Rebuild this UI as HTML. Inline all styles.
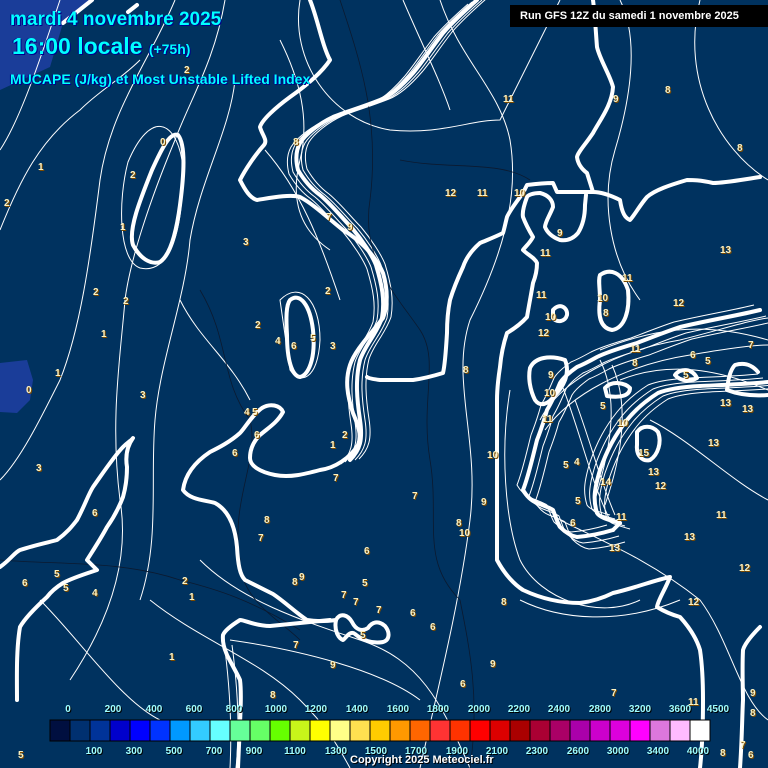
<!DOCTYPE html>
<html><head><meta charset="utf-8"><style>
html,body{margin:0;padding:0;background:#00315f;}
#w{position:relative;width:768px;height:768px;overflow:hidden;background:#00325f;font-family:"Liberation Sans",sans-serif;}
svg{position:absolute;left:0;top:0}
.t{position:absolute;color:#00ffff;font-weight:bold;text-shadow:1px 1px 0 #00008b,-1px 0 0 #00008b;white-space:nowrap}
.n{position:absolute;color:#fff3c0;font-size:10px;font-weight:bold;text-shadow:1px 1px 0 #7a4a00}
.lg{position:absolute;color:#a0ffff;font-size:10px;font-weight:bold;text-shadow:1px 1px 0 #000;transform:translateX(-50%)}
</style></head><body><div id="w">
<svg width="768" height="768" viewBox="0 0 768 768">
<defs>
<path id="pC" d="M477,0 C460,15 450,25 443,33 C430,50 420,65 413,73 C400,88 390,96 380,100 C360,108 345,112 333,117 C318,124 305,135 300,143 C295,152 296,162 298,170 C305,182 313,190 320,195 C332,205 342,218 352,228 C362,240 372,255 376,265 C382,285 385,300 382,318 C376,335 365,345 360,360 C355,380 357,400 360,420 C363,440 360,450 350,460"/>
<path id="pI" d="M768,382 C750,384 720,385 700,386 C680,387 668,389 658,393 C647,400 635,410 627,420 C615,435 607,450 600,470 C594,490 593,500 597,513 C600,518 610,520 620,523"/>
<path id="pI2" d="M760,310 C740,315 710,320 680,327 C665,332 650,338 637,343 C620,348 605,353 597,357 C588,362 582,365 577,367 C570,372 563,378 560,383 C555,395 550,405 547,410 C543,425 540,432 537,440 C532,460 528,478 523,490 C527,497 532,501 537,503 C545,506 550,508 553,510 C556,518 558,524 560,527 C566,533 571,536 577,537 C590,536 603,533 613,530"/>
</defs>
<path d="M0,0 L90,0 L63,23 L50,67 L0,90 Z" fill="#1a3d99"/>
<path d="M0,363 L27,360 L33,380 L30,400 L17,413 L0,412 Z" fill="#1a3d99"/>
<g fill="none" stroke="#fff" stroke-width="1">
<use href="#pC" transform="translate(-5,2)"/>
<use href="#pC" transform="translate(5,0)"/>
<use href="#pC" transform="translate(9,-1)"/>
<use href="#pC" transform="translate(-9,4)"/>
<use href="#pI" transform="translate(-5,-4)"/>
<use href="#pI" transform="translate(-10,-8)"/>
<use href="#pI" transform="translate(5,3)"/>
<use href="#pI" transform="translate(10,6)"/>
<use href="#pI2" transform="translate(6,6)"/>
<use href="#pI2" transform="translate(12,12)"/>
<use href="#pI2" transform="translate(-6,-5)"/>
<path d="M60,0 C40,60 20,120 0,150"/>
<path d="M0,230 C20,180 40,140 80,110 C100,90 120,80 140,60"/>
<path d="M175,0 C150,60 110,110 100,180 C90,260 80,330 60,380 C40,420 20,460 0,480"/>
<path d="M225,0 C215,60 190,100 175,140 C150,200 130,260 125,300 C120,360 110,420 120,500 C130,560 110,620 70,680"/>
<path d="M235,80 C230,130 200,180 190,240 C185,300 160,360 155,420 C150,480 160,540 140,600"/>
<path d="M300,0 C290,60 330,120 390,130 C440,135 470,120 500,120 C520,80 540,40 560,0"/>
<path d="M440,0 C460,60 500,90 510,140 C520,200 500,260 470,320 C450,380 480,440 470,520 C460,600 440,680 420,768"/>
<path d="M403,0 C420,40 440,80 450,110"/>
<path d="M620,0 C640,40 630,100 615,150 C600,200 610,260 640,300"/>
<path d="M700,0 C680,80 720,150 768,180"/>
<path d="M600,350 C650,330 700,320 768,340"/>
<path d="M620,380 C670,360 720,370 768,390"/>
<path d="M650,420 C690,440 730,480 768,500"/>
<path d="M560,520 C600,540 650,560 700,600 C730,640 740,700 768,720"/>
<path d="M200,560 C240,600 300,620 360,640 C420,660 440,700 470,768"/>
<path d="M150,600 C200,640 260,660 300,700 C330,730 340,750 350,768"/>
<path d="M230,640 C300,650 380,670 420,700"/>
<path d="M40,600 C80,640 120,700 160,720"/>
<path d="M280,300 C300,280 320,300 320,340 C318,380 300,385 290,370 Z"/>
<path d="M128,162 C150,110 175,120 182,160 C185,230 170,275 140,268 C118,260 118,200 128,162 Z"/>
<path d="M510,390 C500,450 505,520 520,560 C540,600 600,620 640,600"/>
<path d="M560,380 C580,430 590,480 610,520"/>
<path d="M575,400 C590,440 600,480 615,515"/>
<path d="M540,420 C560,380 620,350 680,340 C720,330 750,320 768,318"/>
<path d="M545,430 C570,395 625,365 690,355 C730,348 755,345 768,345"/>
<path d="M600,360 C620,400 610,450 595,500"/>
<path d="M612,365 C630,405 622,455 605,505"/>
<path d="M280,40 C300,80 310,120 300,160 C290,200 300,230 330,250"/>
<path d="M265,150 C300,190 320,240 340,300"/>
<path d="M180,300 C200,340 230,360 250,400"/>
<path d="M225,650 C230,690 232,730 230,768"/>
<path d="M232,645 C238,690 240,730 236,768"/>
<path d="M520,600 C560,620 620,625 680,600"/>
</g>
<g fill="none" stroke="#0b1a30" stroke-width="0.8">
<path d="M340,0 C360,60 380,120 370,200 C360,260 400,300 420,330 C440,360 420,400 430,460 C440,520 420,560 460,600 C470,650 480,700 470,768"/>
<path d="M200,290 C230,340 220,380 250,420 C260,460 230,500 240,560 C240,600 280,620 300,640"/>
<path d="M400,160 C450,170 500,160 530,180"/>
<path d="M0,560 C60,565 120,560 180,580 C220,590 250,600 300,630"/>
</g>
<g fill="none" stroke="#fff" stroke-width="4" stroke-linejoin="round" stroke-linecap="round">
<path d="M92,0 L63,23"/>
<path d="M137,5 L128,12"/>
<path d="M310,0 C318,20 322,45 330,60 C320,75 300,90 290,97 C275,108 262,120 260,127 C262,135 268,140 264,145 C255,155 245,170 240,180 C245,190 250,198 257,200 C270,198 290,194 300,197 C315,205 330,220 343,230 C360,240 375,255 383,273 C388,290 388,305 383,318 C370,335 355,350 350,365 C345,380 347,395 353,413 C358,425 362,435 358,445 C350,458 335,468 320,470 C305,474 290,478 275,475 C260,472 250,466 250,458 C250,448 255,440 260,435 C268,428 277,423 283,412 C280,405 270,403 262,408 C252,415 245,428 240,433 C230,442 218,448 210,452 C195,462 185,475 183,490 C190,500 205,500 215,503 C228,510 235,525 237,547 C238,565 240,575 245,580 C255,585 265,590 273,594 C285,602 295,612 307,620 C318,622 328,621 336,620"/>
<use href="#pC"/>
<path d="M290,300 C300,292 310,305 313,330 C316,360 308,375 300,377 C292,376 287,360 287,335 C286,318 286,305 290,300 Z"/>
<path d="M178,135 C186,145 184,175 180,205 C176,235 170,255 160,262 C150,265 140,258 133,245 C128,230 140,200 152,170 C162,148 170,132 178,135 Z"/>
<path d="M0,567 C10,560 15,552 20,550 C35,545 50,542 57,540 C68,532 73,525 77,520 C85,505 88,495 93,487 C105,470 115,455 123,447 C128,442 132,440 133,438 C128,445 125,455 127,467 C127,480 125,490 123,497 C118,510 112,520 107,527 C100,540 92,552 87,560 L97,570 C85,574 72,578 63,583 C55,588 50,593 47,597 C35,608 25,618 20,627 C16,650 17,680 17,700"/>
<path d="M336,620 C340,612 348,615 352,622 C356,630 362,632 368,628 C372,622 378,620 385,626 C390,632 390,640 383,642 C372,644 362,640 355,634 C350,630 346,638 343,640 C338,638 334,630 336,620 Z"/>
<path d="M330,620 C310,622 290,624 270,626 C255,626 245,620 240,620 C232,625 225,630 223,635 C222,645 226,652 227,655 C232,665 238,675 240,680 C242,695 240,720 238,768"/>
<path d="M760,177 C740,180 725,183 713,183 C700,180 693,180 687,180 C670,185 655,190 647,197 C640,205 636,213 630,220 C625,218 622,213 620,200 C610,195 600,192 593,192 C580,192 565,192 557,192 L553,183 C545,183 535,184 527,185 L523,193 C518,200 510,210 507,217 C505,225 504,230 503,233 C495,237 487,240 480,243 C472,250 466,258 463,267 C457,280 453,290 450,300 C448,310 447,320 447,333 C446,350 445,365 443,373 C430,377 420,379 413,380 C400,380 390,380 380,380 C372,379 368,378 367,377"/>
<path d="M593,0 C595,15 596,35 597,47 C600,60 610,75 613,87 C612,105 600,120 593,133 C585,145 578,152 577,157 C578,165 583,170 587,173 L593,192"/>
<path d="M540,193 C533,193 528,195 527,197 C524,205 522,212 523,217 C526,225 530,232 533,237 C530,243 525,247 523,250 C528,255 535,258 537,263 C537,272 535,278 533,283 C531,295 529,305 527,317 C520,325 512,330 507,333 C503,345 501,355 500,367 C498,380 497,390 497,400 C497,450 497,520 497,560 C505,575 515,585 523,590 C540,598 560,603 580,603 C595,601 605,597 613,593 C635,588 655,580 670,577 C665,590 658,600 657,607 C665,612 673,615 680,617 C690,628 697,640 700,650 C703,670 703,690 703,700 C703,730 702,750 700,768"/>
<path d="M540,193 C548,195 553,200 553,207 C550,215 545,222 545,227 C547,232 552,237 560,240 C567,241 573,239 578,233 C583,225 585,215 585,205 L586,195"/>
<path d="M600,275 C610,268 622,272 628,290 C630,310 625,328 612,330 C600,328 598,315 600,300 C600,288 598,280 600,275 Z"/>
<path d="M553,310 C560,302 568,308 567,315 C565,322 557,323 553,318 Z"/>
<path d="M530,368 C535,357 550,355 565,360 C570,372 565,385 555,395 C548,405 540,407 535,400 C530,390 528,378 530,368 Z"/>
<path d="M637,432 C642,425 652,425 658,432 C662,442 658,455 650,460 C642,462 636,455 637,445 Z"/>
<path d="M675,375 C680,368 692,368 697,378 C690,382 680,381 675,375 Z"/>
<path d="M605,388 C612,380 625,383 630,388 C630,396 620,398 607,396 Z"/>
<use href="#pI2"/>
<path d="M613,530 L620,523"/>
<use href="#pI"/>
<path d="M768,395 C755,396 740,395 727,390 C728,380 730,370 735,365 C745,362 752,365 758,372"/>
<path d="M760,627 C752,635 745,643 743,650 C742,670 743,690 743,700 C742,720 742,740 740,768"/>
</g>
<rect x="510" y="5" width="258" height="22" fill="#000"/>
<g stroke="#000" stroke-width="1">
<rect x="50" y="720" width="20" height="21" fill="#000f40"/><rect x="70" y="720" width="20" height="21" fill="#003070"/><rect x="90" y="720" width="20" height="21" fill="#003399"/><rect x="110" y="720" width="20" height="21" fill="#0000cc"/><rect x="130" y="720" width="20" height="21" fill="#0000ff"/><rect x="150" y="720" width="20" height="21" fill="#0033ff"/><rect x="170" y="720" width="20" height="21" fill="#0099ff"/><rect x="190" y="720" width="20" height="21" fill="#33ccff"/><rect x="210" y="720" width="20" height="21" fill="#66ffff"/><rect x="230" y="720" width="20" height="21" fill="#66ff99"/><rect x="250" y="720" width="20" height="21" fill="#66ff66"/><rect x="270" y="720" width="20" height="21" fill="#66ff00"/><rect x="290" y="720" width="20" height="21" fill="#c8f51a"/><rect x="310" y="720" width="20" height="21" fill="#ffff00"/><rect x="330" y="720" width="20" height="21" fill="#ffff88"/><rect x="350" y="720" width="20" height="21" fill="#ffe050"/><rect x="370" y="720" width="20" height="21" fill="#ffcc00"/><rect x="390" y="720" width="20" height="21" fill="#ff9900"/><rect x="410" y="720" width="20" height="21" fill="#ff6600"/><rect x="430" y="720" width="20" height="21" fill="#ff3333"/><rect x="450" y="720" width="20" height="21" fill="#ff3300"/><rect x="470" y="720" width="20" height="21" fill="#ff0000"/><rect x="490" y="720" width="20" height="21" fill="#dd0000"/><rect x="510" y="720" width="20" height="21" fill="#aa0000"/><rect x="530" y="720" width="20" height="21" fill="#aa0033"/><rect x="550" y="720" width="20" height="21" fill="#aa0066"/><rect x="570" y="720" width="20" height="21" fill="#aa00aa"/><rect x="590" y="720" width="20" height="21" fill="#cc00cc"/><rect x="610" y="720" width="20" height="21" fill="#dd00dd"/><rect x="630" y="720" width="20" height="21" fill="#ff00ff"/><rect x="650" y="720" width="20" height="21" fill="#dd77dd"/><rect x="670" y="720" width="20" height="21" fill="#ffbbff"/><rect x="690" y="720" width="20" height="21" fill="#ffffff"/>
</g>
</svg>
<div class="t" style="left:10px;top:9px;font-size:19px">mardi 4 novembre 2025</div>
<div class="t" style="left:12px;top:33px;font-size:23px">16:00 locale <span style="font-size:14px">(+75h)</span></div>
<div class="t" style="left:10px;top:71px;font-size:14px">MUCAPE (J/kg) et Most Unstable Lifted Index</div>
<div style="position:absolute;left:520px;top:10px;color:#fff;font-size:11px;font-weight:bold">Run GFS 12Z du samedi 1 novembre 2025</div>
<div style="position:absolute;left:350px;top:754px;color:#fff;font-size:11px;font-weight:bold;text-shadow:1px 1px 0 #000">Copyright 2025 Meteociel.fr</div>
<span class="lg" style="left:68px;top:704px">0</span><span class="lg" style="left:113px;top:704px">200</span><span class="lg" style="left:154px;top:704px">400</span><span class="lg" style="left:194px;top:704px">600</span><span class="lg" style="left:234px;top:704px">800</span><span class="lg" style="left:276px;top:704px">1000</span><span class="lg" style="left:316px;top:704px">1200</span><span class="lg" style="left:357px;top:704px">1400</span><span class="lg" style="left:398px;top:704px">1600</span><span class="lg" style="left:438px;top:704px">1800</span><span class="lg" style="left:479px;top:704px">2000</span><span class="lg" style="left:519px;top:704px">2200</span><span class="lg" style="left:559px;top:704px">2400</span><span class="lg" style="left:600px;top:704px">2800</span><span class="lg" style="left:640px;top:704px">3200</span><span class="lg" style="left:680px;top:704px">3600</span><span class="lg" style="left:718px;top:704px">4500</span>
<span class="lg" style="left:94px;top:746px">100</span><span class="lg" style="left:134px;top:746px">300</span><span class="lg" style="left:174px;top:746px">500</span><span class="lg" style="left:214px;top:746px">700</span><span class="lg" style="left:254px;top:746px">900</span><span class="lg" style="left:295px;top:746px">1100</span><span class="lg" style="left:336px;top:746px">1300</span><span class="lg" style="left:376px;top:746px">1500</span><span class="lg" style="left:416px;top:746px">1700</span><span class="lg" style="left:457px;top:746px">1900</span><span class="lg" style="left:497px;top:746px">2100</span><span class="lg" style="left:537px;top:746px">2300</span><span class="lg" style="left:578px;top:746px">2600</span><span class="lg" style="left:618px;top:746px">3000</span><span class="lg" style="left:658px;top:746px">3400</span><span class="lg" style="left:698px;top:746px">4000</span>
<span class="n" style="left:160px;top:137px">0</span><span class="n" style="left:38px;top:162px">1</span><span class="n" style="left:130px;top:170px">2</span><span class="n" style="left:4px;top:198px">2</span><span class="n" style="left:120px;top:222px">1</span><span class="n" style="left:243px;top:237px">3</span><span class="n" style="left:93px;top:287px">2</span><span class="n" style="left:123px;top:296px">2</span><span class="n" style="left:101px;top:329px">1</span><span class="n" style="left:255px;top:320px">2</span><span class="n" style="left:325px;top:286px">2</span><span class="n" style="left:275px;top:336px">4</span><span class="n" style="left:291px;top:341px">6</span><span class="n" style="left:310px;top:333px">5</span><span class="n" style="left:330px;top:341px">3</span><span class="n" style="left:26px;top:385px">0</span><span class="n" style="left:55px;top:368px">1</span><span class="n" style="left:140px;top:390px">3</span><span class="n" style="left:244px;top:407px">4</span><span class="n" style="left:252px;top:407px">5</span><span class="n" style="left:254px;top:430px">6</span><span class="n" style="left:232px;top:448px">6</span><span class="n" style="left:342px;top:430px">2</span><span class="n" style="left:330px;top:440px">1</span><span class="n" style="left:36px;top:463px">3</span><span class="n" style="left:92px;top:508px">6</span><span class="n" style="left:264px;top:515px">8</span><span class="n" style="left:258px;top:533px">7</span><span class="n" style="left:333px;top:473px">7</span><span class="n" style="left:412px;top:491px">7</span><span class="n" style="left:364px;top:546px">6</span><span class="n" style="left:22px;top:578px">6</span><span class="n" style="left:54px;top:569px">5</span><span class="n" style="left:63px;top:583px">5</span><span class="n" style="left:92px;top:588px">4</span><span class="n" style="left:182px;top:576px">2</span><span class="n" style="left:189px;top:592px">1</span><span class="n" style="left:292px;top:577px">8</span><span class="n" style="left:299px;top:572px">9</span><span class="n" style="left:341px;top:590px">7</span><span class="n" style="left:362px;top:578px">5</span><span class="n" style="left:353px;top:597px">7</span><span class="n" style="left:376px;top:605px">7</span><span class="n" style="left:410px;top:608px">6</span><span class="n" style="left:430px;top:622px">6</span><span class="n" style="left:360px;top:630px">5</span><span class="n" style="left:293px;top:640px">7</span><span class="n" style="left:330px;top:660px">9</span><span class="n" style="left:169px;top:652px">1</span><span class="n" style="left:270px;top:690px">8</span><span class="n" style="left:18px;top:750px">5</span><span class="n" style="left:293px;top:137px">8</span><span class="n" style="left:326px;top:212px">7</span><span class="n" style="left:347px;top:222px">9</span><span class="n" style="left:184px;top:65px">2</span><span class="n" style="left:503px;top:94px">11</span><span class="n" style="left:613px;top:94px">9</span><span class="n" style="left:665px;top:85px">8</span><span class="n" style="left:737px;top:143px">8</span><span class="n" style="left:445px;top:188px">12</span><span class="n" style="left:477px;top:188px">11</span><span class="n" style="left:514px;top:188px">10</span><span class="n" style="left:557px;top:228px">9</span><span class="n" style="left:540px;top:248px">11</span><span class="n" style="left:720px;top:245px">13</span><span class="n" style="left:622px;top:273px">11</span><span class="n" style="left:536px;top:290px">11</span><span class="n" style="left:597px;top:293px">10</span><span class="n" style="left:673px;top:298px">12</span><span class="n" style="left:603px;top:308px">8</span><span class="n" style="left:545px;top:312px">10</span><span class="n" style="left:538px;top:328px">12</span><span class="n" style="left:630px;top:344px">11</span><span class="n" style="left:632px;top:358px">8</span><span class="n" style="left:690px;top:350px">6</span><span class="n" style="left:705px;top:356px">5</span><span class="n" style="left:748px;top:340px">7</span><span class="n" style="left:463px;top:365px">8</span><span class="n" style="left:548px;top:370px">9</span><span class="n" style="left:683px;top:370px">5</span><span class="n" style="left:544px;top:388px">10</span><span class="n" style="left:600px;top:401px">5</span><span class="n" style="left:720px;top:398px">13</span><span class="n" style="left:742px;top:404px">13</span><span class="n" style="left:542px;top:414px">11</span><span class="n" style="left:617px;top:418px">10</span><span class="n" style="left:708px;top:438px">13</span><span class="n" style="left:487px;top:450px">10</span><span class="n" style="left:638px;top:448px">15</span><span class="n" style="left:563px;top:460px">5</span><span class="n" style="left:574px;top:457px">4</span><span class="n" style="left:648px;top:467px">13</span><span class="n" style="left:600px;top:477px">14</span><span class="n" style="left:655px;top:481px">12</span><span class="n" style="left:481px;top:497px">9</span><span class="n" style="left:575px;top:496px">5</span><span class="n" style="left:716px;top:510px">11</span><span class="n" style="left:456px;top:518px">8</span><span class="n" style="left:459px;top:528px">10</span><span class="n" style="left:570px;top:518px">6</span><span class="n" style="left:616px;top:512px">11</span><span class="n" style="left:684px;top:532px">13</span><span class="n" style="left:609px;top:543px">13</span><span class="n" style="left:739px;top:563px">12</span><span class="n" style="left:501px;top:597px">8</span><span class="n" style="left:688px;top:597px">12</span><span class="n" style="left:490px;top:659px">9</span><span class="n" style="left:460px;top:679px">6</span><span class="n" style="left:611px;top:688px">7</span><span class="n" style="left:688px;top:697px">11</span><span class="n" style="left:750px;top:688px">9</span><span class="n" style="left:750px;top:708px">8</span><span class="n" style="left:740px;top:740px">7</span><span class="n" style="left:720px;top:748px">8</span><span class="n" style="left:748px;top:750px">6</span>
</div></body></html>
